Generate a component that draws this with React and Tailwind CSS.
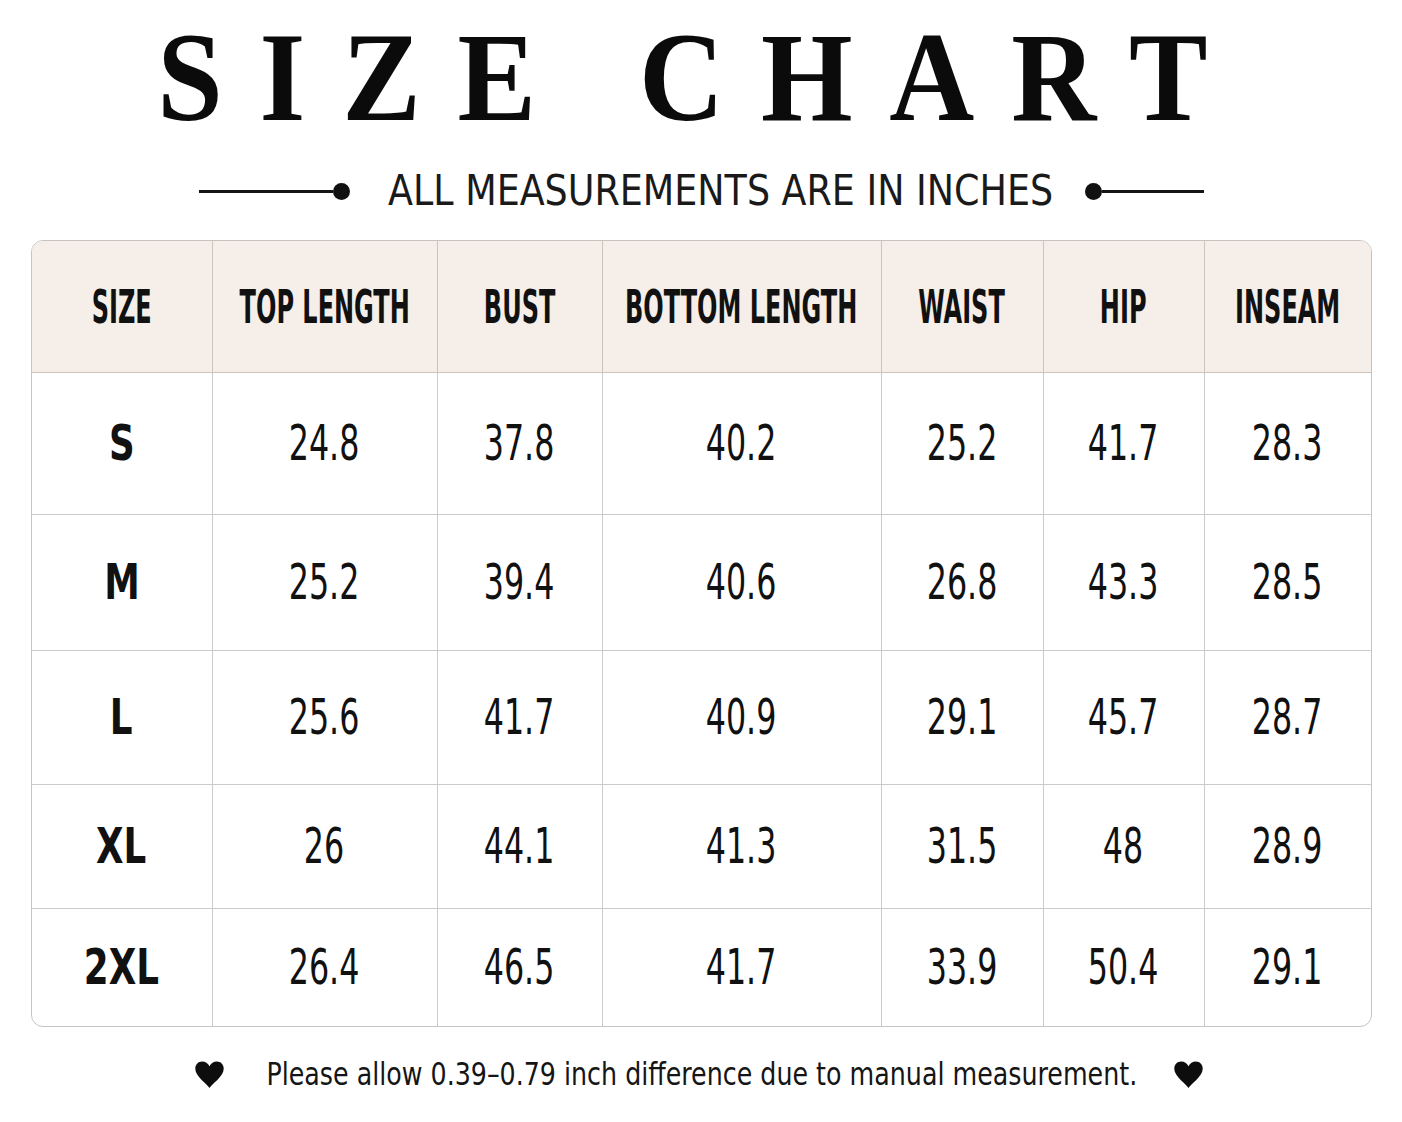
import React from "react";

const headers = ["SIZE", "TOP LENGTH", "BUST", "BOTTOM LENGTH", "WAIST", "HIP", "INSEAM"];

const rows = [
  ["S", "24.8", "37.8", "40.2", "25.2", "41.7", "28.3"],
  ["M", "25.2", "39.4", "40.6", "26.8", "43.3", "28.5"],
  ["L", "25.6", "41.7", "40.9", "29.1", "45.7", "28.7"],
  ["XL", "26", "44.1", "41.3", "31.5", "48", "28.9"],
  ["2XL", "26.4", "46.5", "41.7", "33.9", "50.4", "29.1"],
];

// font used for the table, subtitle and note (condensed sans)
const sans = "font-['Liberation_Sans_Narrow','DejaVu_Sans_Condensed',sans-serif]";

const Heart = () => (
  <svg width="31" height="29" viewBox="0 0 24 22" className="shrink-0">
    <path
      d="M12 21.5 C10.5 18.5 1 12.5 1 6.5 C1 3.2 3.4 1 6.3 1 C8.8 1 10.9 2.6 12 4.6 C13.1 2.6 15.2 1 17.7 1 C20.6 1 23 3.2 23 6.5 C23 12.5 13.5 18.5 12 21.5 Z"
      fill="#0d0d0d"
    />
  </svg>
);

export default function App() {
  return (
    <div className="w-[1402px] h-[1122px] bg-white text-[#111] overflow-hidden">
      <div className="pt-[13px] flex justify-center">
        <h1 className="inline-block scale-x-[0.92] whitespace-nowrap font-['Liberation_Serif',serif] font-bold text-[128px] leading-none tracking-[40px] text-[#0b0b0b]">
          SIZE CHART
        </h1>
      </div>

      <div className="mt-[29px] flex items-center justify-center">
        <div className="flex items-center">
          <div className="w-[134px] h-[3px] bg-[#151515]" />
          <div className="w-[17px] h-[17px] rounded-full bg-[#111]" />
        </div>
        <div className="ml-[39px] mr-[32px] w-[664px] flex justify-center">
          <span className={`${sans} inline-block whitespace-nowrap scale-x-[0.965] text-[42px] leading-none text-[#1a1a1a]`}>
            ALL MEASUREMENTS ARE IN INCHES
          </span>
        </div>
        <div className="flex items-center">
          <div className="w-[17px] h-[17px] rounded-full bg-[#111]" />
          <div className="w-[102px] h-[3px] bg-[#151515]" />
        </div>
      </div>

      <div className={`mt-[28px] mx-auto w-[1341px] rounded-[12px] border border-[#c9c3bf] overflow-hidden ${sans}`}>
        <div className="grid grid-cols-[181px_225px_165px_279px_162px_161px_166px] grid-rows-[132px_142px_136px_134px_124px_117px]">
          {headers.map((h, i) => (
            <div
              key={h}
              className={`min-w-0 flex items-center justify-center bg-[#f5eee9] border-b border-[#cdc3bb] ${
                i < headers.length - 1 ? "border-r" : ""
              }`}
            >
              <span className="inline-block shrink-0 scale-x-[0.58] font-bold text-[46px] leading-none whitespace-nowrap">
                {h}
              </span>
            </div>
          ))}
          {rows.map((row, r) =>
            row.map((cell, c) => (
              <div
                key={`${r}-${c}`}
                className={`min-w-0 flex items-center justify-center border-[#cbcbcb] ${
                  c < row.length - 1 ? "border-r" : ""
                } ${r < rows.length - 1 ? "border-b" : ""}`}
              >
                {c === 0 ? (
                  <span className="inline-block scale-x-[0.81] font-bold text-[49px] leading-none">{cell}</span>
                ) : (
                  <span className="inline-block scale-x-[0.72] text-[49px] leading-none">{cell}</span>
                )}
              </div>
            ))
          )}
        </div>
      </div>

      <div className="mt-[31px] flex items-center justify-center pr-[4px]">
        <Heart />
        <div className="ml-[42px] mr-[37px] w-[869px] flex justify-center">
          <span className={`${sans} inline-block whitespace-nowrap scale-x-[0.88] text-[32px] leading-none text-[#151515]`}>
            Please allow 0.39–0.79 inch difference due to manual measurement.
          </span>
        </div>
        <Heart />
      </div>
    </div>
  );
}
